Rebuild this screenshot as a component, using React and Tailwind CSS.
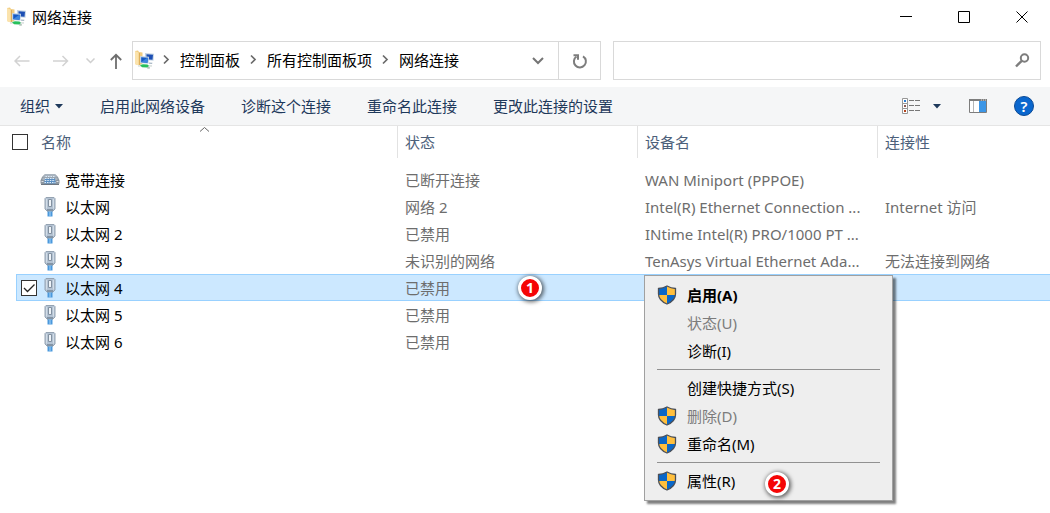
import { useState } from 'react';

const connections = [
  { name: '宽带连接', status: '已断开连接', device: 'WAN Miniport (PPPOE)', access: '', modem: true },
  { name: '以太网', status: '网络 2', device: 'Intel(R) Ethernet Connection ...', access: 'Internet 访问' },
  { name: '以太网 2', status: '已禁用', device: 'INtime Intel(R) PRO/1000 PT ...', access: '' },
  { name: '以太网 3', status: '未识别的网络', device: 'TenAsys Virtual Ethernet Ada...', access: '无法连接到网络' },
  { name: '以太网 4', status: '已禁用', device: '', access: '' },
  { name: '以太网 5', status: '已禁用', device: '', access: '' },
  { name: '以太网 6', status: '已禁用', device: '', access: '' },
];

const menuItems = [
  { label: '启用(A)', shield: true, bold: true },
  { label: '状态(U)', disabled: true },
  { label: '诊断(I)' },
  null,
  { label: '创建快捷方式(S)' },
  { label: '删除(D)', shield: true, disabled: true },
  { label: '重命名(M)', shield: true },
  null,
  { label: '属性(R)', shield: true },
];

const commands = ['启用此网络设备', '诊断这个连接', '重命名此连接', '更改此连接的设置'];
const crumbs = ['控制面板', '所有控制面板项', '网络连接'];

function NetworkFolderIcon() {
  return (
    <svg width="20" height="20" viewBox="0 0 20 20" className="shrink-0">
      <path d="M0 1 3 .5l1 1.500 3.500.5v11L4 15.500 0 14z" fill="#f0cc80" />
      <path d="M0 1 3.500 2.500v13L0 14z" fill="#fbe3ad" />
      <path d="M4.500 3v12" stroke="#dcae5c" />
      <path d="M10 3l9 .8-.5 7-8.500-.8z" fill="#c3d4e4" />
      <path d="M11.500 4.200l6.500.6-.5 5-6-.5z" fill="#1d4fb4" />
      <path d="M5 6l9 .8-.5 7-8.500-.8z" fill="#bfd2e5" />
      <path d="M6.200 7.200l6.800.6-.5 5-6.300-.6z" fill="#1559c4" />
      <path d="M6.300 12 12 8l.8 0-.3 4.800z" fill="#3c86df" />
      <path d="M14 12.500l3.500.3-.5 1.200-3-.3z" fill="#a8b8c5" />
      <path d="M3 15h14v1.800H3z" fill="#dfe4e2" />
      <path d="M5 15l3-.8 4.500.3 1.500 1.500-2 1.500-5-.2z" fill="#27c05c" />
      <path d="M12 17l3 .2-.4 1.600-2.400-.2z" fill="#a9bdb1" />
    </svg>
  );
}

function ModemIcon() {
  return (
    <svg width="20" height="20" viewBox="0 0 20 20">
      <path d="M4.500 4.500h11q2.500 1.500 4 6v2.500q0 1-1 1h-17q-1 0-1-1v-2.500q1.500-4.500 4-6z" fill="#8d969f" />
      <path d="M5 4h10l2.500 3.500h-15z" fill="#a9b4bf" />
      <path d="M2.500 8.500h15v1h-15z" fill="#c9d4de" />
      <path d="M5 8.500h10l.8 5H4.200z" fill="#5b8fc3" />
      <path d="M5.500 6.500h9M5 8.500h10M4.800 10.500h10.400M4.500 12.500h11" stroke="#dcebf8" strokeDasharray="1.500 1" />
      <path d="M1 14.500h18" stroke="#6f7780" />
      <path d="M1.500 11.500h2M16.500 11.500h2" stroke="#dfe3e7" />
    </svg>
  );
}

function PlugIcon() {
  return (
    <svg width="20" height="20" viewBox="0 0 20 20">
      <path d="M6 .5h8l1 1v10.500l-2 2H7l-2-2V1.500z" fill="#b4c3d3" stroke="#95a3b2" />
      <path d="M6.500 2v9.500M13.500 2v9.500" stroke="#d3dde7" />
      <path d="M8.500 2.500h3v7h-3z" fill="#eef3f8" stroke="#8391a0" />
      <path d="M7 12h6v2.500H7z" fill="#8494a5" />
      <path d="M7.500 14.500h5V19.500h-5z" fill="#4a98dc" />
      <path d="M10 14.500V19.500" stroke="#a8d4f7" />
    </svg>
  );
}

function ShieldIcon() {
  return (
    <svg width="20" height="20" viewBox="0 0 20 20">
      <clipPath id="shield">
        <path d="M10 1Q6 3.200 1.500 3.500V9q0 6.500 8.500 10 8.500-3.500 8.500-10V3.500Q14 3.200 10 1z" />
      </clipPath>
      <g clipPath="url(#shield)">
        <path d="M0 0h10v10H0z" fill="#0a67c8" />
        <path d="M10 0h10v10H10z" fill="#ffbf3d" />
        <path d="M0 10h10v10H0z" fill="#ffbf3d" />
        <path d="M10 10h10v10H10z" fill="#0a67c8" />
      </g>
      <path
        d="M10 1Q6 3.200 1.500 3.500V9q0 6.500 8.500 10 8.500-3.500 8.500-10V3.500Q14 3.200 10 1z"
        fill="none"
        stroke="#4a4f58"
        strokeWidth="1.300"
      />
    </svg>
  );
}

function Chevron() {
  return (
    <svg width="27" height="12" viewBox="0 0 27 12" fill="none" stroke="#6a6a6a" strokeWidth="1.700">
      <path d="M11 1.500 15 5.500l-4 4" />
    </svg>
  );
}

function Triangle() {
  return (
    <svg width="8" height="5" viewBox="0 0 8 5" fill="#1e395b">
      <path d="M0 0h8L4 4.500z" />
    </svg>
  );
}

function CheckBox({ checked, onChange, label }) {
  return (
    <span className="relative block h-4 w-4 shrink-0">
      <input
        type="checkbox"
        aria-label={label}
        checked={checked}
        onChange={onChange}
        className="block h-4 w-4 appearance-none border border-[#333] bg-white"
      />
      {checked && (
        <svg className="pointer-events-none absolute inset-0" width="16" height="16" fill="none" stroke="#222" strokeWidth="1.300">
          <path d="M3 8l3.500 3.500L13.500 4.500" />
        </svg>
      )}
    </span>
  );
}

function StepBadge({ n, className }) {
  return (
    <span
      className={
        'absolute flex h-6 w-6 items-center justify-center rounded-full border-[3px] border-white bg-[#f50505] font-["Noto_Sans",sans-serif] text-sm leading-none font-bold text-white shadow-[1px_1px_4px_1px_rgba(0,0,0,0.6)] ' +
        className
      }
    >
      {n}
    </span>
  );
}

function TitleBar() {
  return (
    <header className="flex h-[34px] items-center pl-[7px]">
      <NetworkFolderIcon />
      <h1 className="ml-[5px] flex-1">网络连接</h1>
      <button aria-label="最小化" className="flex h-full w-[58px] items-center justify-center">
        <svg width="12" height="12" stroke="#000"><path d="M0 5.500h12" /></svg>
      </button>
      <button aria-label="最大化" className="flex h-full w-[58px] items-center justify-center">
        <svg width="12" height="12" fill="none" stroke="#000"><path d="M.5.5h11v11H.5z" /></svg>
      </button>
      <button aria-label="关闭" className="flex h-full w-[57px] items-center justify-center pl-px">
        <svg width="12" height="12" stroke="#000"><path d="M.5.5l11 11M11.500.5l-11 11" /></svg>
      </button>
    </header>
  );
}

function AddressBar() {
  return (
    <nav className="flex items-center pt-[7px] pr-[9px] pb-[7px]">
      <div className="flex w-[132px] shrink-0 items-center pl-[14px]">
        <button aria-label="后退" disabled>
          <svg width="16" height="14" fill="none" stroke="#d2d2d2" strokeWidth="1.500"><path d="M15.500 7H1M6 2 1 7l5 5" /></svg>
        </button>
        <button aria-label="前进" disabled className="ml-[23px]">
          <svg width="16" height="14" fill="none" stroke="#d2d2d2" strokeWidth="1.500"><path d="M0 7h14.500M9.500 2l5 5-5 5" /></svg>
        </button>
        <button aria-label="最近位置" disabled className="ml-[17px]">
          <svg width="9" height="6" fill="none" stroke="#cfcfcf" strokeWidth="1.500"><path d="M.5.5l4 4 4-4" /></svg>
        </button>
        <button aria-label="向上" className="ml-[15px]">
          <svg width="12" height="16" fill="none" stroke="#6e6e6e" strokeWidth="1.800"><path d="M6 16V2M.8 7 6 1.800 11.200 7" /></svg>
        </button>
      </div>
      <div className="grid flex-1 grid-cols-[469fr_428fr] gap-3">
        <div className="flex h-[39px] border border-[#d9d9d9]">
          <div className="flex flex-1 items-center pb-px pl-[2px]">
            <NetworkFolderIcon />
            {crumbs.map((c, i) => (
              <span key={c} className={i === 0 ? 'flex items-center -ml-[2px]' : 'flex items-center'}>
                <Chevron />
                <a href="#" className="whitespace-nowrap">{c}</a>
              </span>
            ))}
          </div>
          <button aria-label="展开" className="w-10">
            <svg width="12" height="8" className="mx-auto" fill="none" stroke="#757575" strokeWidth="2"><path d="M1 1l5 5 5-5" /></svg>
          </button>
          <button aria-label="刷新" className="w-[42px] border-l border-[#d9d9d9]">
            <svg width="16" height="16" className="mx-auto" fill="none" stroke="#7d7d7d" strokeWidth="2">
              <path d="M11 3.300a6 6 0 1 1-6.500.2" />
              <path d="M1.500 2.200h4.500v4.500" />
            </svg>
          </button>
        </div>
        <div className="flex h-[39px] items-center border border-[#d9d9d9] pr-[10px]">
          <input type="text" aria-label="搜索" className="h-full min-w-0 flex-1 px-2 outline-none" />
          <svg width="15" height="15" fill="none" stroke="#7d7d7d">
            <circle cx="9.500" cy="5" r="3.700" strokeWidth="2" />
            <path d="M6.700 7.800 1 13.500" strokeWidth="2.400" />
          </svg>
        </div>
      </div>
    </nav>
  );
}

function CommandBar() {
  return (
    <div className="flex h-[39px] items-center border-b border-[#e5e5e5] bg-[#f5f6f7] pr-4 pl-5 text-[#1e395b]">
      <div className="flex flex-1 items-center gap-9">
        <button className="flex items-center gap-[5px] pr-px">
          组织
          <Triangle />
        </button>
        {commands.map((c) => (
          <button key={c}>{c}</button>
        ))}
      </div>
      <button aria-label="更改视图" className="flex items-center gap-3">
        <svg width="19" height="16" viewBox="0 0 19 16" fill="none">
          <path d="M.5.5h5v5h-5zM.5 5.500h5v5h-5zM.5 10.500h5v5h-5z" fill="#fff" stroke="#979797" />
          <path d="M2 2h2v2H2z" fill="#2f7fd0" />
          <path d="M2 7h2v2H2z" fill="#8a5a52" />
          <path d="M2 12h2v2H2z" fill="#b5441c" />
          <path d="M7 2.500h11M7 7.500h11M7 12.500h11" stroke="#777" strokeDasharray="5 1" />
        </svg>
        <Triangle />
      </button>
      <button aria-label="预览窗格" className="ml-7">
        <svg width="18" height="14" viewBox="0 0 18 14">
          <path d="M.5.5h17v13H.5z" fill="#fff" stroke="#7d7d7d" />
          <path d="M0 0h18v2H0z" fill="#7d7d7d" />
          <path d="M12 1h1M14 1h1M16 1h1" stroke="#ddd" />
          <path d="M4.500 2v11" stroke="#b5b5b5" />
          <path d="M10 2h7v11h-7z" fill="#3c96e6" />
        </svg>
      </button>
      <button
        aria-label="帮助"
        className='ml-[27px] flex h-5 w-5 items-center justify-center rounded-full border border-[#0b4a96] bg-[#0a67ce] font-["Noto_Sans",sans-serif] text-[15px] leading-none font-semibold text-white'
      >
        ?
      </button>
    </div>
  );
}

function ContextMenu() {
  return (
    <div
      role="menu"
      className="absolute top-[275px] left-[644px] w-[249px] border border-[#a0a0a0] bg-[#eee] py-[5px] shadow-[3px_3px_2px_0_rgba(0,0,0,0.5)]"
    >
      {menuItems.map((item, i) =>
        item ? (
          <button
            key={i}
            role="menuitem"
            disabled={item.disabled}
            className={
              'flex h-7 w-full items-center pl-3 text-left ' +
              (item.disabled ? 'text-[#7c7c7c] ' : 'text-black ') +
              (item.bold ? 'font-bold' : '')
            }
          >
            <span className="w-[30px]">{item.shield && <ShieldIcon />}</span>
            {item.label}
          </button>
        ) : (
          <hr key={i} className="mx-3 my-1 border-[#919191]" />
        )
      )}
      <StepBadge n={2} className="right-[103px] bottom-1" />
    </div>
  );
}

export default function App() {
  const [selected, setSelected] = useState(4);
  const th = 'h-8 border-l border-[#e2e2e2] pl-[7px] text-left font-normal';

  return (
    <div className='relative min-h-screen overflow-hidden bg-white font-["Noto_Sans","Noto_Sans_CJK_SC",sans-serif] text-[15px] leading-5 text-black'>
      <TitleBar />
      <AddressBar />
      <CommandBar />

      <div className="pl-4">
        <table className="w-full table-fixed border-separate border-spacing-0">
          <colgroup>
            <col className="w-[381px]" />
            <col className="w-[240px]" />
            <col className="w-[240px]" />
            <col />
          </colgroup>
          <thead className="text-[#4c607a]">
            <tr>
              <th className="relative h-8 font-normal">
                <div className="-ml-1 flex items-center gap-[13px]">
                  <CheckBox label="全选" checked={false} onChange={() => setSelected(-1)} />
                  名称
                </div>
                <svg className="absolute top-0 left-[183px]" width="11" height="7" fill="none" stroke="#666">
                  <path d="M1 5.500l4.500-4 4.500 4" />
                </svg>
              </th>
              <th className={th}>状态</th>
              <th className={th}>设备名</th>
              <th className={th}>连接性</th>
            </tr>
          </thead>
          <tbody className="text-[#6d6d6d]">
            <tr>
              <td colSpan={4} className="h-2" />
            </tr>
            {connections.map((c, i) => {
              const on = i === selected;
              const cell = 'h-[27px] overflow-hidden whitespace-nowrap ' + (on ? 'border-y border-[#99d1ff] bg-[#cce8ff] ' : '');
              return (
                <tr key={c.name} onClick={() => setSelected(i)}>
                  <td className={cell + (on ? 'border-l pl-1' : 'pl-[5px]')}>
                    <div className="flex items-center text-black">
                      <span className="w-[19px]">
                        {on && <CheckBox label={c.name} checked onChange={() => setSelected(-1)} />}
                      </span>
                      {c.modem ? <ModemIcon /> : <PlugIcon />}
                      <span className="ml-[5px]">{c.name}</span>
                    </div>
                  </td>
                  <td className={cell + 'pl-2'}>{c.status}</td>
                  <td className={cell + 'pl-2'}>{c.device}</td>
                  <td className={cell + 'pl-2'}>{c.access}</td>
                </tr>
              );
            })}
          </tbody>
        </table>
      </div>

      <StepBadge n={1} className="top-[276px] left-[518px]" />
      <ContextMenu />
    </div>
  );
}
